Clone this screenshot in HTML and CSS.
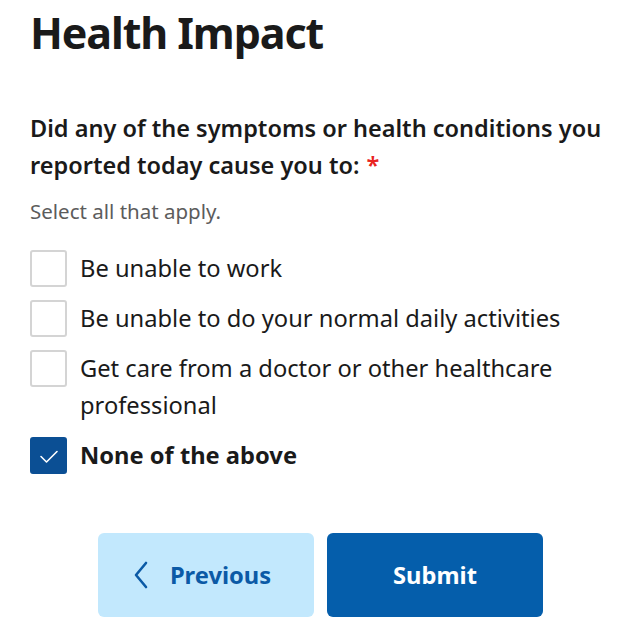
FILE: index.html
```html
<!DOCTYPE html>
<html lang="en">
<head>
    <meta charset="UTF-8">
    <meta name="viewport" content="width=device-width, initial-scale=1.0">
    <title>Health Impact</title>
    <link rel="stylesheet" href="styles.css">
</head>
<body>
    <main class="survey">
        <h1 class="page-title">Health Impact</h1>

        <div class="question">
            <h2 class="question-text required">Did any of the symptoms or health conditions you reported today cause you to:</h2>
            <p class="hint">Select all that apply.</p>

            <ul class="options">
                <li class="option">
                    <span class="box"></span>
                    <span class="label">Be unable to work</span>
                </li>
                <li class="option">
                    <span class="box"></span>
                    <span class="label">Be unable to do your normal daily activities</span>
                </li>
                <li class="option">
                    <span class="box"></span>
                    <span class="label">Get care from a doctor or other healthcare professional</span>
                </li>
                <li class="option checked">
                    <span class="box">
                        <svg width="22" height="22" viewBox="0 0 22 22"><path d="M3 11.5 L8.5 17 L19 6.5" fill="none" stroke="#fff" stroke-width="1.6" stroke-linecap="round" stroke-linejoin="round"/></svg>
                    </span>
                    <span class="label">None of the above</span>
                </li>
            </ul>
        </div>

        <div class="actions">
            <button class="btn btn-prev">
                <svg width="16" height="28" viewBox="0 0 16 28"><path d="M13 2 L3 14 L13 26" fill="none" stroke="#0b5aa6" stroke-width="2.6" stroke-linecap="round" stroke-linejoin="round"/></svg>
                Previous
            </button>
            <button class="btn btn-submit">Submit</button>
        </div>
    </main>
</body>
</html>
```

FILE: styles.css
```css
body {
    margin: 0;
    font-family: "Noto Sans", "Open Sans", sans-serif;
    color: #1a1a1a;
    background: #fff;
}

.survey {
    padding: 0 24px 0 30px;
}

.page-title {
    margin: 0;
    padding-top: 2px;
    font-size: 43px;
    font-weight: 700;
    letter-spacing: -1.1px;
    line-height: 62px;
}

.question {
    margin-top: 46px;
}
.question-text {
    margin: 0;
    font-size: 23.5px;
    font-weight: 600;
    line-height: 37px;
}
.required::after {
    content: "*";
    color: #e8231f;
    margin-left: 7px;
}
.hint {
    margin: 13px 0 25px;
    font-size: 20.5px;
    color: #5c5c5c;
    line-height: 28px;
}

.options {
    list-style: none;
    margin: 0;
    padding: 0;
}
.option {
    display: flex;
    align-items: flex-start;
    gap: 13px;
    margin-bottom: 13px;
}
.box {
    flex: none;
    width: 37px;
    height: 37px;
    box-sizing: border-box;
    border: 2px solid #d4d4d4;
    border-radius: 3px;
    display: flex;
    align-items: center;
    justify-content: center;
}
.label {
    font-size: 23.7px;
    line-height: 37px;
}
.option.checked .box {
    background: #0b4f94;
    border-color: #0b4f94;
}
.option.checked .label {
    font-weight: 700;
}

.actions {
    display: flex;
    justify-content: center;
    gap: 13px;
    margin-top: 59px;
}
.btn {
    width: 216px;
    height: 84px;
    border: none;
    border-radius: 6px;
    font-family: "Noto Sans", "Open Sans", sans-serif;
    font-size: 23.7px;
    font-weight: 700;
    display: flex;
    align-items: center;
    justify-content: center;
    gap: 21px;
}
.btn-prev {
    background: #c2e8fd;
    color: #0b5aa6;
    padding-right: 14px;
}
.btn-submit {
    background: #055eab;
    color: #fff;
}
```
